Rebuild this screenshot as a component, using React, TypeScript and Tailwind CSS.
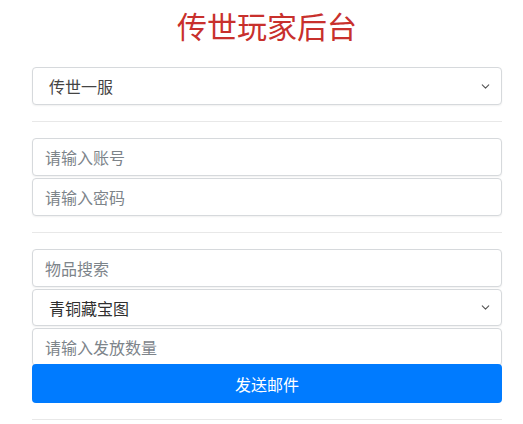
import { ChevronDown } from "lucide-react";

const font = { fontFamily: '"Noto Sans CJK SC", "Noto Sans", sans-serif' };

function TextField({ placeholder }: { placeholder: string }) {
  return (
    <input
      type="text"
      placeholder={placeholder}
      className="block h-[38px] w-full rounded border border-[#d6d9dc] bg-white px-3 text-[16px] text-[#495057] shadow-[0_1px_2px_rgba(0,0,0,0.06)] outline-none placeholder:text-[#7d848a]"
    />
  );
}

function FakeSelect({ value, short }: { value: string; short?: boolean }) {
  return (
    <div
      className={
        (short ? "h-[37px] text-[#2f2f2f] " : "h-[38px] text-[#444] ") +
        "flex w-full items-center justify-between rounded border border-[#d6d9dc] bg-white pl-4 pr-[9px] text-[16px] shadow-[0_1px_2px_rgba(0,0,0,0.06)]"
      }
    >
      <span>{value}</span>
      <ChevronDown className="size-[13px] text-[#555]" strokeWidth={2} />
    </div>
  );
}

function Divider() {
  return <hr className="my-4 border-0 border-t border-[#e8e8e8]" />;
}

export default function App() {
  return (
    <div className="min-h-[424px] bg-white" style={font}>
      <div className="ml-[32px] w-[470px]">
        <h1 className="mt-[7px] text-center text-[30px] leading-[36px] font-normal text-[#c8302c]">
          传世玩家后台
        </h1>

        <div className="mt-[24px]">
          <FakeSelect value="传世一服" />
        </div>

        <Divider />

        <div className="flex flex-col gap-[2px]">
          <TextField placeholder="请输入账号" />
          <TextField placeholder="请输入密码" />
        </div>

        <Divider />

        <div className="flex flex-col gap-[2px]">
          <TextField placeholder="物品搜索" />
          <FakeSelect value="青铜藏宝图" short />
          <TextField placeholder="请输入发放数量" />
        </div>
        <button className="relative -mt-[2px] block h-[39px] w-full rounded bg-[#007bff] text-[16px] text-white">
          发送邮件
        </button>

        <Divider />
      </div>
    </div>
  );
}
